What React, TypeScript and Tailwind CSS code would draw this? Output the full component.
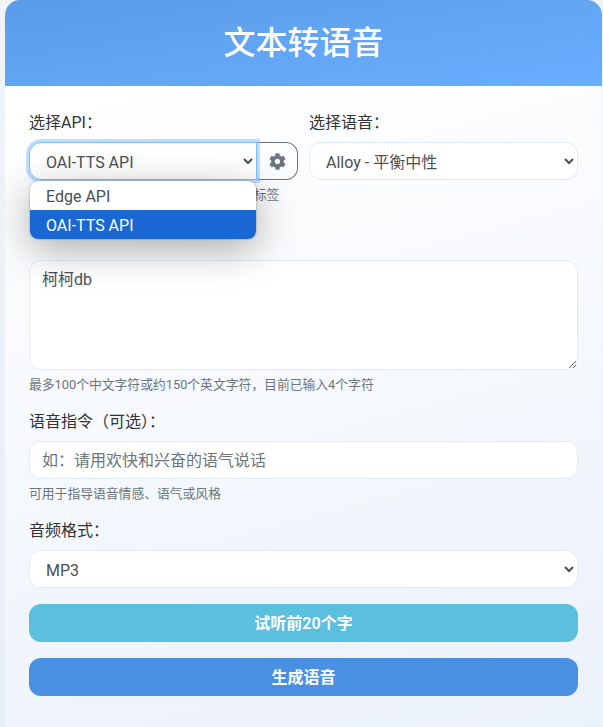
import React from "react";
import { FaCog } from "react-icons/fa";

const labelClass = "block h-6 pt-px text-base leading-6 text-[#333333] mb-2";
const fieldClass =
  "block w-full h-[38px] rounded-xl border border-[#e1ecf9] bg-white text-base text-[#495057] outline-none";
const hintClass = "mt-[6px] h-[17px] text-[12.8px] leading-[18px] text-[#6c757d]";

const App: React.FC = () => {
  return (
    <div
      className="h-[727px] overflow-hidden pl-[5px] pr-px bg-gradient-to-b from-[#f0f4f9] to-[#e7eef7] text-[#333333]"
      style={{ fontFamily: 'Roboto, "Noto Sans CJK SC", sans-serif' }}
    >
      <div className="h-full rounded-t-[15px] overflow-hidden bg-[linear-gradient(165deg,#ffffff_10%,#ebf1fa_100%)]">
        {/* Header */}
        <div className="h-[86px] flex items-center justify-center bg-gradient-to-br from-[#5a9be8] to-[#69afff]">
          <h1 className="text-[32px] leading-none font-medium text-white">文本转语音</h1>
        </div>

        <div className="px-6 pt-6">
          {/* API + voice */}
          <div className="grid grid-cols-2 gap-[11px]">
            <div className="relative">
              <label className={labelClass}>选择API：</label>
              <div className="flex">
                <select
                  defaultValue="oai"
                  className="relative z-10 w-[228px] h-[38px] pl-3 pt-0.5 rounded-l-xl border border-[#80bdff] bg-white text-base text-[#495057] outline-none shadow-[0_0_0_3px_rgba(128,189,255,0.5)]"
                >
                  <option value="edge">Edge API</option>
                  <option value="oai">OAI-TTS API</option>
                </select>
                <button className="flex-1 h-[38px] pl-px flex items-center justify-center rounded-r-xl border border-l-0 border-[#6c757d] text-[#6c757d]">
                  <FaCog className="text-[17px]" />
                </button>
              </div>
              <p className={hintClass + " whitespace-nowrap"}>点击右侧齿轮图标管理API配置和自定义标签</p>

              {/* Open select list */}
              <div className="absolute z-20 left-px top-[71px] w-[226px] rounded-lg overflow-hidden bg-white text-base text-[#495057] shadow-[0_10px_40px_rgba(0,0,0,0.32),0_0_2px_rgba(0,0,0,0.4)]">
                <div className="h-[29px] pl-4 leading-[31px]">Edge API</div>
                <div className="h-[29px] pl-4 leading-[31px] bg-[#1967d2] text-white">OAI-TTS API</div>
              </div>
            </div>

            <div>
              <label className={labelClass}>选择语音：</label>
              <select defaultValue="alloy" className={fieldClass + " pl-3 pt-0.5"}>
                <option value="alloy">Alloy - 平衡中性</option>
              </select>
            </div>
          </div>

          {/* Text */}
          <textarea
            defaultValue="柯柯db"
            className="block mt-[57px] w-full h-[110px] rounded-xl border border-[#e1ecf9] bg-white px-3 py-[7px] text-base leading-6 text-[#495057] outline-none"
          />
          <p className={hintClass}>最多100个中文字符或约150个英文字符，目前已输入4个字符</p>

          {/* Instructions */}
          <label className={labelClass + " mt-4"}>语音指令（可选）：</label>
          <input
            placeholder="如：请用欢快和兴奋的语气说话"
            className={fieldClass + " px-3 placeholder:text-[#6c757d]"}
          />
          <p className={hintClass}>可用于指导语音情感、语气或风格</p>

          {/* Format */}
          <label className={labelClass + " mt-4"}>音频格式：</label>
          <select defaultValue="mp3" className={fieldClass + " pl-3 pt-0.5"}>
            <option value="mp3">MP3</option>
          </select>

          {/* Actions */}
          <button className="block mt-4 w-full h-[38px] pt-0.5 rounded-xl bg-[#5bc0de] text-base font-semibold text-white">
            试听前20个字
          </button>
          <button className="block mt-4 w-full h-[38px] pt-0.5 rounded-xl bg-[#4a90e2] text-base font-semibold text-white">
            生成语音
          </button>
        </div>
      </div>
    </div>
  );
};

export default App;
